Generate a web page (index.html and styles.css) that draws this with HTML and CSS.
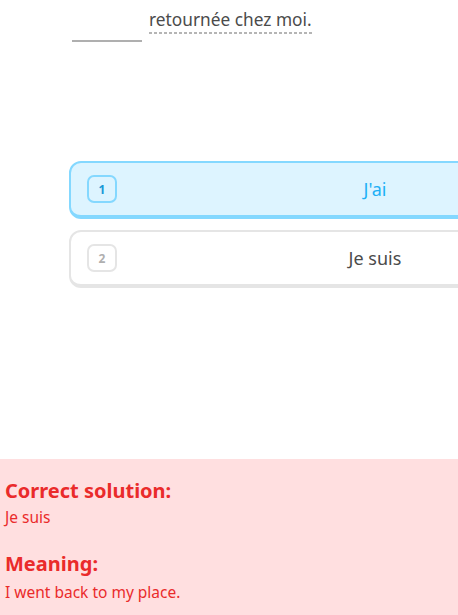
FILE: index.html
```html
<!DOCTYPE html>
<html lang="fr">
<head>
<meta charset="utf-8">
<link rel="stylesheet" href="styles.css">
</head>
<body>
<div class="page">
  <div class="sentence">
    <span class="blank"></span>
    <span class="hint">retournée chez moi.</span>
  </div>
  <div class="choices">
    <div class="choice selected">
      <span class="key">1</span>
      <span class="label">J'ai</span>
    </div>
    <div class="choice">
      <span class="key">2</span>
      <span class="label">Je suis</span>
    </div>
  </div>
  <div class="feedback">
    <h2 class="fb-title">Correct solution:</h2>
    <p class="fb-text">Je suis</p>
    <h2 class="fb-title meaning">Meaning:</h2>
    <p class="fb-text second">I went back to my place.</p>
  </div>
</div>
</body>
</html>
```
FILE: styles.css
```css
html, body {
  margin: 0;
  padding: 0;
  overflow: hidden;
  background: #fff;
}
.page {
  width: 458px;
  height: 615px;
  overflow: hidden;
  display: flex;
  flex-direction: column;
  font-family: "Noto Sans", "DejaVu Sans", sans-serif;
  color: #4b4b4b;
}
.sentence {
  display: flex;
  align-items: flex-end;
  gap: 7px;
  padding: 2px 0 0 72px;
  height: 32px;
}
.blank {
  width: 70px;
  height: 0;
  border-bottom: 2px solid #afafaf;
  margin-bottom: -8px;
}
.hint {
  font-size: 17.3px;
  line-height: 22px;
  color: #4b4b4b;
  padding-bottom: 3px;
  background-image: repeating-linear-gradient(90deg, #b5b5b5 0 3px, transparent 3px 5px);
  background-size: 100% 2px;
  background-repeat: no-repeat;
  background-position: left bottom;
}
.choices {
  display: flex;
  flex-direction: column;
  gap: 11px;
  margin: 127px 0 0 69px;
}
.choice {
  width: 582px;
  flex: none;
  box-sizing: border-box;
  height: 58px;
  display: flex;
  align-items: center;
  padding: 0 16px;
  border: 2px solid #e5e5e5;
  border-bottom-width: 4px;
  border-radius: 12px;
  background: #fff;
}
.choice.selected {
  background: #ddf4ff;
  border-color: #84d8ff;
}
.key {
  width: 30px;
  height: 28px;
  box-sizing: border-box;
  border: 2px solid #e5e5e5;
  border-radius: 7px;
  display: flex;
  align-items: center;
  justify-content: center;
  font-size: 12px;
  font-weight: 700;
  color: #afafaf;
}
.selected .key {
  border-color: #84d8ff;
  color: #1899d6;
}
.label {
  flex: 1;
  text-align: center;
  font-size: 18px;
  color: #4b4b4b;
}
.selected .label {
  color: #1cb0f6;
}
.feedback {
  margin-top: auto;
  height: 156px;
  flex: none;
  box-sizing: border-box;
  background: #ffdfe0;
  padding: 19px 5px 0;
  color: #ea2b2b;
}
.fb-title {
  margin: 0;
  font-size: 20px;
  line-height: 26px;
  font-weight: 700;
}
.fb-title.meaning {
  margin-top: 23px;
}
.fb-text {
  margin: 3px 0 0;
  font-size: 15.5px;
  line-height: 21px;
}
.fb-text.second {
  margin-top: 5px;
}
```
